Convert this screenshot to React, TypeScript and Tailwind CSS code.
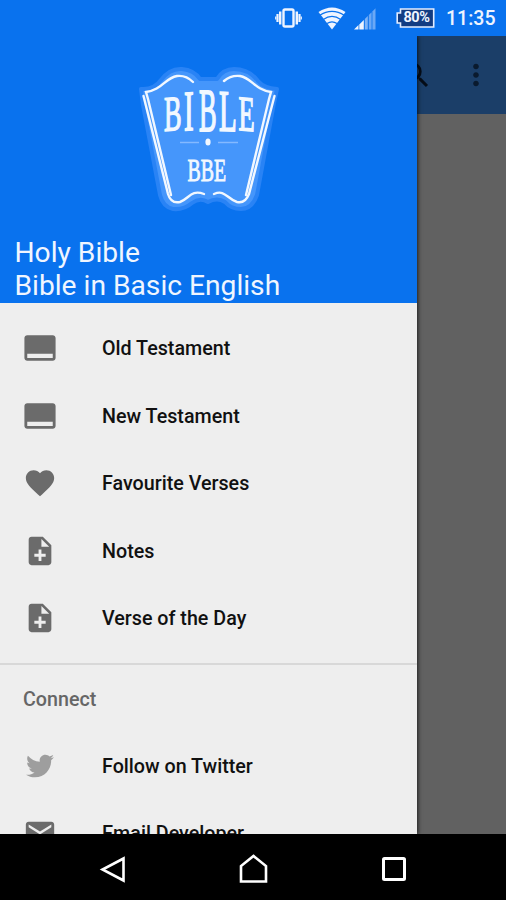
import type { IconType } from "react-icons";
import { FaTwitter } from "react-icons/fa";
import { MdCallToAction, MdEmail, MdFavorite, MdMoreVert, MdNoteAdd, MdSearch } from "react-icons/md";

type Item = { label: string; icon: IconType; small?: boolean };

const mainItems: Item[] = [
  { label: "Old Testament", icon: MdCallToAction },
  { label: "New Testament", icon: MdCallToAction },
  { label: "Favourite Verses", icon: MdFavorite },
  { label: "Notes", icon: MdNoteAdd },
  { label: "Verse of the Day", icon: MdNoteAdd },
];

const connectItems: Item[] = [
  { label: "Follow on Twitter", icon: FaTwitter, small: true },
  { label: "Email Developer", icon: MdEmail },
];

// x, baseline, horizontal scale, vertical scale and skew of each title letter
const titleLetters = [
  { char: "B", x: 44, y: 76, sx: 0.6, sy: 1.13, skew: -5 },
  { char: "I", x: 64, y: 75.5, sx: 0.66, sy: 1.3, skew: -3 },
  { char: "B", x: 79, y: 75.5, sx: 0.6, sy: 1.4, skew: 0 },
  { char: "L", x: 99, y: 75.5, sx: 0.66, sy: 1.33, skew: 2 },
  { char: "E", x: 118.5, y: 75, sx: 0.6, sy: 1.13, skew: 5 },
];

function StatusBar() {
  return (
    <div className="z-20 flex h-9 shrink-0 items-center bg-[#0972ee] text-[#eef4ff]">
      <svg className="ml-[275px] h-[22px] w-7" viewBox="0 0 28 22" fill="none" stroke="currentColor">
        <rect x="8.5" y="2.5" width="10" height="17" rx="1.5" strokeWidth="2.4" />
        <path d="M5.2 4.5v13M21.8 4.5v13" strokeWidth="2.4" />
        <path d="M2.5 7v8M24.5 7v8" strokeWidth="2.2" />
        <path d="M.7 9.5v3M26.3 9.5v3" strokeWidth="1.2" />
      </svg>
      <svg className="ml-[15px] h-6 w-7" viewBox="0 0 28 24">
        <path d="M14 23.5.5 6Q14-3.2 27.5 6Z" fill="currentColor" />
        <path
          d="M1.5 9.4q12.5-8.2 25 0M5.3 13.4q8.7-6 17.4 0M9 17.6q5-3.6 10 0"
          fill="none"
          stroke="#0972ee"
          strokeWidth="1.2"
        />
      </svg>
      <svg className="ml-[8px] h-[23px] w-[22px]" viewBox="0 0 22 23">
        <path d="M0 22.5 4.5 18v4.5Z" fill="currentColor" />
        <path d="M5.3 17.4 9.8 13v9.5H5.3Z" fill="currentColor" />
        <path d="M10.8 12 13.8 9v13.5h-3Z" fill="#7cb3f8" />
        <path d="M14.8 8 17.6 5.2v17.3h-2.8Z" fill="#6aa8f6" />
        <path d="M18.4 4.4 21.5 1.3v21.2h-3.1Z" fill="#6aa8f6" />
      </svg>
      <div className="relative ml-[20px] flex h-5 w-[39px] items-center">
        <svg className="absolute inset-0 h-5 w-[39px]" viewBox="0 0 39 20">
          <path
            d="M4.5 1h33.2v18H4.5v-4H1.2V5h3.3Z"
            fill="#123c82"
            stroke="#e4edff"
            strokeWidth="1.6"
          />
        </svg>
        <span className="relative ml-[7.5px] mt-px text-[14.5px] font-bold leading-none tracking-[-0.5px]">80%</span>
      </div>
      <span className="ml-[11px] mt-[2px] text-[19.5px] font-medium leading-none">11:35</span>
    </div>
  );
}

function Logo() {
  return (
    <svg className="h-[165px] w-[180px]" viewBox="0 0 180 165">
      <path
        d="M21 34Q34 35 41 25Q50 13 62 14Q74 15 80 24H97Q103 14 114 14Q129 14 138 26Q144 33 157 34L154 48 137 140Q132 154 121 154Q111 154 105 147Q97 142 88 147Q80 142 72 148Q64 155 53 154Q43 152 40 140L23 50Z"
        fill="#4596fb"
        stroke="#2983f5"
        strokeWidth="4"
        strokeLinejoin="round"
      />
      <g fill="none" stroke="#f2f8ff" strokeLinecap="round">
        <path d="M73 27Q66 20 57 21C45 23 42 35 26 37L28 44 51 140" strokeWidth="2.4" />
        <path d="M104 26Q111 20 120 21C132 23 135 35 151 37L149 44 126 140" strokeWidth="2.4" />
        <path d="M23.5 41 48 139Q51 149 60 147C69 144 71 134 84 139" strokeWidth="2.4" />
        <path d="M154.5 41 129 139Q125 149 117 147C107 144 105 134 94 139" strokeWidth="2.4" />
      </g>
      <g fill="#f2f8ff" stroke="#f2f8ff" fontFamily="Liberation Serif, serif">
        {titleLetters.map((l, i) => (
          <text
            key={i}
            transform={`translate(${l.x} ${l.y}) skewY(${l.skew}) scale(${l.sx} ${l.sy})`}
            fontSize="44"
            strokeWidth="1.3"
          >
            {l.char}
          </text>
        ))}
        <text transform="translate(67.5 126) scale(.62 1)" fontSize="32" strokeWidth=".9">
          BBE
        </text>
      </g>
      <ellipse cx="88" cy="87" rx="2.6" ry="3.6" fill="#f2f8ff" />
      <path d="M60 87.5h19M98 87.5h20" stroke="#84b9ff" strokeWidth="1.4" />
    </svg>
  );
}

function DrawerItem({ label, icon: Icon, small }: Item) {
  return (
    <li className="flex h-[67.5px] items-center pl-[23px]">
      <span className="flex w-[34px] justify-center">
        {small ? <Icon className="size-[28px] text-[#9e9e9e]" /> : <Icon className="size-[34px] text-[#6b6b6b]" />}
      </span>
      <span className="ml-[45px] pt-[2px] text-[19.7px] font-medium leading-none text-[#111]">{label}</span>
    </li>
  );
}

function Drawer() {
  return (
    <aside className="z-10 flex w-[417px] shrink-0 flex-col overflow-hidden bg-[#eee] shadow-[1px_0_4px_rgba(0,0,0,0.7)]">
      <header className="h-[266.5px] shrink-0 bg-[#0972ee]">
        <div className="flex pl-[120px] pt-[19px]">
          <Logo />
        </div>
        <div className="pl-[14.5px] pt-[15.5px] text-[28.2px] leading-[33px] text-[#f0f6ff]">
          <p>Holy Bible</p>
          <p>Bible in Basic English</p>
        </div>
      </header>
      <ul className="mt-[12px] shrink-0">
        {mainItems.map((item) => (
          <DrawerItem key={item.label} {...item} />
        ))}
      </ul>
      <div className="mt-[10.5px] h-[2px] shrink-0 bg-[#d8d8d8]" />
      <h2 className="flex h-[67.5px] shrink-0 items-center pl-[23px] pt-[3px] text-[19.7px] font-medium text-[#666]">
        Connect
      </h2>
      <ul className="shrink-0">
        {connectItems.map((item) => (
          <DrawerItem key={item.label} {...item} />
        ))}
      </ul>
    </aside>
  );
}

function NavBar() {
  return (
    <nav className="z-20 flex h-[66px] shrink-0 items-center bg-black pl-[99px] pt-[3px]">
      <svg className="h-[30px] w-7" viewBox="0 0 28 30" fill="none" stroke="#fff" strokeWidth="2.6">
        <path d="M24.5 4.5v22L3.5 15.5Z" />
      </svg>
      <svg className="mb-[2px] ml-[111px] h-8 w-[31px]" viewBox="0 0 31 32" fill="none" stroke="#fff" strokeWidth="2.6">
        <path d="M3 29.5V14L15.5 4 28 14v15.5Z" />
      </svg>
      <svg className="ml-[112px] size-[26px]" viewBox="0 0 26 26" fill="none" stroke="#fff" strokeWidth="3">
        <rect x="2.5" y="2.5" width="21" height="21" rx="1" />
      </svg>
    </nav>
  );
}

export default function App() {
  return (
    <div className="flex h-screen w-full flex-col overflow-hidden font-[Roboto,sans-serif]">
      <StatusBar />
      <main className="flex min-h-0 flex-1 bg-[#616161]">
        <Drawer />
        <div className="min-w-0 flex-1">
          <div className="flex h-[78px] items-center bg-[#1b3e68]">
            <MdSearch className="-ml-[18px] size-[34px] shrink-0 text-[#050d18]" />
            <MdMoreVert className="ml-[26px] size-[34px] shrink-0 text-[#0a1a2e]" />
          </div>
        </div>
      </main>
      <NavBar />
    </div>
  );
}
